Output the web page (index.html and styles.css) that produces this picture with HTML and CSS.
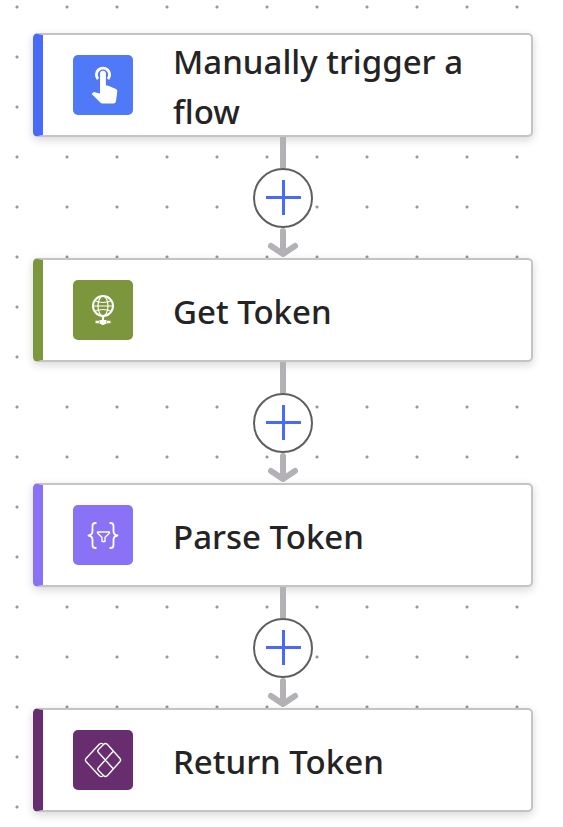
FILE: index.html
```html
<!DOCTYPE html>
<html lang="en">
<head>
    <meta charset="UTF-8">
    <meta name="viewport" content="width=device-width, initial-scale=1.0">
    <title>Flow Designer</title>
    <link rel="stylesheet" href="styles.css">
</head>
<body>
    <main class="flow">
        <div class="card trigger">
            <div class="card-icon">
                <svg viewBox="0 0 60 60" aria-hidden="true">
                    <path d="M25 24A6.6 6.6 0 1 1 35 24" fill="none" stroke="#fff" stroke-width="2.9"/>
                    <path d="M27 18.6a2.9 2.9 0 0 1 5.9 0V30.5h1.8l8.3 3.5q1.5.8 1.3 2.3L43 46q-.3 2.5-2.6 2.5H29.5q-1.3 0-2.2-.9L18.7 39l1.2-1.3q.8-.8 2-.5l5.1 1.2z" fill="#fff"/>
                </svg>
            </div>
            <h2 class="card-title">Manually trigger a flow</h2>
        </div>

        <div class="connector">
            <div class="line"></div>
            <button class="add-btn" type="button" aria-label="Insert a new step">
                <svg viewBox="0 0 36 36" aria-hidden="true"><path d="M1 17.5h35M18.5 0v35"/></svg>
            </button>
            <svg class="arrow" viewBox="0 0 30 30" aria-hidden="true"><path d="M15 3v22M3 18l12 8 12-8"/></svg>
        </div>

        <div class="card http">
            <div class="card-icon">
                <svg viewBox="0 0 60 60" aria-hidden="true" fill="none" stroke="#fff">
                    <circle cx="30" cy="26" r="10" stroke-width="2"/>
                    <ellipse cx="30" cy="26" rx="5" ry="10" stroke-width="1.2"/>
                    <path d="M20 26h20M21.5 20.5q8.5 4 17 0M21.5 31.5q8.5-4 17 0" stroke-width="1.2"/>
                    <path d="M30 36v5" stroke-width="2.2"/>
                    <path d="M22.5 42h3.5M34 42h3.5" stroke-width="2.6"/>
                    <path d="M26.5 42h7" stroke-width="4"/>
                    <path d="M28.5 44.5h3" stroke-width="1"/>
                </svg>
            </div>
            <h2 class="card-title">Get Token</h2>
        </div>

        <div class="connector">
            <div class="line"></div>
            <button class="add-btn" type="button" aria-label="Insert a new step">
                <svg viewBox="0 0 36 36" aria-hidden="true"><path d="M1 17.5h35M18.5 0v35"/></svg>
            </button>
            <svg class="arrow" viewBox="0 0 30 30" aria-hidden="true"><path d="M15 3v22M3 18l12 8 12-8"/></svg>
        </div>

        <div class="card parse">
            <div class="card-icon">
                <svg viewBox="0 0 60 60" aria-hidden="true" fill="none" stroke="#fff" stroke-linejoin="round">
                    <path d="M23.5 18h-1q-3 0-3 3v5q0 4-4 4.5 4 .5 4 4.5v5q0 3 3 3h1M36.5 18h1q3 0 3 3v5q0 4 4 4.5-4 .5-4 4.5v5q0 3-3 3h-1" stroke-width="1.8"/>
                    <path d="M24.500 27h12v1l-4.5 4.5v4h-3v-4l-4.5-4.5z" stroke-width="1.3"/>
                </svg>
            </div>
            <h2 class="card-title">Parse Token</h2>
        </div>

        <div class="connector">
            <div class="line"></div>
            <button class="add-btn" type="button" aria-label="Insert a new step">
                <svg viewBox="0 0 36 36" aria-hidden="true"><path d="M1 17.5h35M18.5 0v35"/></svg>
            </button>
            <svg class="arrow" viewBox="0 0 30 30" aria-hidden="true"><path d="M15 3v22M3 18l12 8 12-8"/></svg>
        </div>

        <div class="card return">
            <div class="card-icon">
                <svg viewBox="0 0 60 60" aria-hidden="true" fill="none" stroke="#fff" stroke-width="1.4" stroke-linejoin="round">
                    <path d="M30 14q-2-1.5-4 .5L13 28.5q-1.2 1.5 0 3L26 45.5q2 2 4 .5"/>
                    <path d="M30.5 14.5q2-2 4 0L47 28.5q1.2 1.5 0 3L34.5 45.5q-2 2-4 0L25.5 40.5q-1.5-1.5 0-3L40 21.5M30.5 14.5L25.5 19.5q-1.5 1.5 0 3L40 38.5"/>
                </svg>
            </div>
            <h2 class="card-title">Return Token</h2>
        </div>
    </main>
</body>
</html>
```
FILE: styles.css
```css
/* Global Styles and Reset */
* {
    margin: 0;
    padding: 0;
    box-sizing: border-box;
}

body {
    font-family: "Segoe UI", "Noto Sans", sans-serif;
    color: #242424;
    background-color: #fff;
    /* Dotted canvas */
    background-image: radial-gradient(circle, #999 1px, transparent 2px);
    background-size: 50px 50px;
    background-position: -8px -18px;
}

.flow {
    padding: 33px 30px 15px 33px;
}

/* Cards */
.card {
    display: flex;
    align-items: center;
    gap: 40px;
    min-height: 104px;
    padding: 0 40px 0 30px;
    background: #fff;
    border: 2px solid #c4c4c4;
    border-left-width: 10px;
    border-radius: 5px;
    box-shadow: 0 3px 10px rgba(0, 0, 0, 0.16);
}

.card-icon {
    flex: none;
    width: 60px;
    height: 60px;
    border-radius: 5px;
}

.card-icon svg {
    display: block;
}

.card-title {
    margin: 2px 0 -2px;
    font-size: 33px;
    font-weight: 500;
    line-height: 50px;
}

/* Card Colors */
.trigger {
    border-left-color: #486af6;
}

.trigger .card-icon {
    background: #4f79f6;
}

.http {
    border-left-color: #7b963c;
}

.http .card-icon {
    background: #7b963c;
}

.parse {
    border-left-color: #8a72f6;
}

.parse .card-icon {
    background: #8a72f6;
}

.return {
    border-left-color: #672d6f;
}

.return .card-icon {
    background: #672d6f;
}

/* Connectors */
.connector {
    display: flex;
    flex-direction: column;
    align-items: center;
}

.line {
    width: 6px;
    height: 31px;
    background: #b3b1b6;
}

.add-btn {
    display: flex;
    justify-content: center;
    align-items: center;
    width: 60px;
    height: 60px;
    background: #fff;
    border: 2px solid #605e5c;
    border-radius: 50%;
    cursor: pointer;
}

.add-btn:hover {
    background: #f3f5ff;
}

.add-btn svg {
    width: 36px;
    height: 36px;
    stroke: #486af6;
    stroke-width: 3;
}

.arrow {
    width: 30px;
    height: 30px;
    fill: none;
    stroke: #b3b1b6;
    stroke-width: 6;
    stroke-linecap: round;
    stroke-linejoin: round;
    overflow: visible;
}
```
